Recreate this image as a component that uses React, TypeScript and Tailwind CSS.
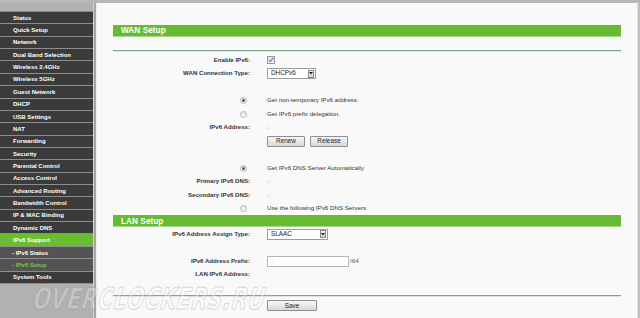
import React from "react";

type Item = { t: string; kind?: "active" | "sub" | "current" };

const menu: Item[] = [
  { t: "Status" },
  { t: "Quick Setup" },
  { t: "Network" },
  { t: "Dual Band Selection" },
  { t: "Wireless 2.4GHz" },
  { t: "Wireless 5GHz" },
  { t: "Guest Network" },
  { t: "DHCP" },
  { t: "USB Settings" },
  { t: "NAT" },
  { t: "Forwarding" },
  { t: "Security" },
  { t: "Parental Control" },
  { t: "Access Control" },
  { t: "Advanced Routing" },
  { t: "Bandwidth Control" },
  { t: "IP & MAC Binding" },
  { t: "Dynamic DNS" },
  { t: "IPv6 Support", kind: "active" },
  { t: "- IPv6 Status", kind: "sub" },
  { t: "- IPv6 Setup", kind: "current" },
  { t: "System Tools" },
];

function MenuItem({ item }: { item: Item }) {
  let cls = "bg-[#3b3b3b] text-white pl-[13px]";
  if (item.kind === "active") cls = "bg-[#69bd2f] text-white pl-[13px]";
  if (item.kind === "sub") cls = "bg-[#545454] text-white pl-[12px]";
  if (item.kind === "current") cls = "bg-[#545454] text-[#7cc444] pl-[12px]";
  return (
    <div
      className={`h-[12.36px] border-t border-[#8d8d8d] flex items-center text-[6px] font-bold leading-none whitespace-nowrap ${cls}`}
    >
      {item.t}
    </div>
  );
}

function Row({ label, children, radio }: { label?: string; children?: React.ReactNode; radio?: React.ReactNode }) {
  return (
    <div className="h-[13.5px] flex items-center">
      <div className="w-[137px] shrink-0 flex justify-end items-center text-right font-bold text-[6.1px] text-[#333] leading-none whitespace-nowrap">
        {radio ? <div className="pr-[3px] flex items-center">{radio}</div> : label}
      </div>
      <div className="ml-[17px] flex items-center text-[6.2px] text-[#333] leading-none whitespace-nowrap">{children}</div>
    </div>
  );
}

function Radio({ on }: { on?: boolean }) {
  return (
    <div className="w-[7px] h-[7px] rounded-full border border-[#b4b4b4] bg-gradient-to-b from-[#e6e6e6] to-[#fbfbfb] flex items-center justify-center">
      {on ? <div className="w-[3px] h-[3px] rounded-full bg-[#2f5f8f]" /> : null}
    </div>
  );
}

function Select({ value, w }: { value: string; w: string }) {
  return (
    <div className={`${w} h-[11px] border border-[#9c9c9c] bg-white flex items-center justify-between pl-[3px] pr-[1px]`}>
      <span className="text-[6.4px] text-[#222]">{value}</span>
      <div className="w-[6px] h-[8px] border border-[#8a8a8a] bg-gradient-to-b from-[#f2f2f2] to-[#d4d4d4] flex items-center justify-center">
        <svg width="4" height="3" viewBox="0 0 4 3">
          <path d="M0 0 L4 0 L2 2.5 Z" fill="#222" />
        </svg>
      </div>
    </div>
  );
}

function Btn({ label, w }: { label: string; w: string }) {
  return (
    <div
      className={`${w} h-[11px] border border-[#8f8f8f] rounded-[1px] bg-gradient-to-b from-[#f7f7f7] to-[#d9d9d9] flex items-center justify-center text-[6.4px] text-[#222]`}
    >
      {label}
    </div>
  );
}

function Bar({ title }: { title: string }) {
  return (
    <div className="h-[12px] bg-[#67bb32] border-b border-[#a9da8a] flex items-center pl-[8px] text-white font-bold text-[8.3px] leading-none">
      {title}
    </div>
  );
}

export default function App() {
  return (
    <div className="w-[640px] h-[318px] overflow-hidden relative bg-[#f9f9f9] flex flex-col font-['Liberation_Sans',Arial,sans-serif]">
      <div className="h-[3px] bg-[#b8b8b8] shrink-0" />
      <div className="flex flex-1 min-h-0">
        <aside className="w-[93px] shrink-0 bg-[#b1b1b1] flex flex-col pt-[8px]">
          {menu.map((m) => (
            <MenuItem key={m.t} item={m} />
          ))}
          <div className="h-[1px] bg-[#8d8d8d]" />
        </aside>
        <div className="w-[1px] bg-[#d0d0d0]" />
        <div className="w-[2px] bg-[#a6a6a6]" />
        <div className="w-[1px] bg-[#ececec]" />
        <main className="flex-1 px-[16px] pt-[22px] flex flex-col">
          <Bar title="WAN Setup" />
          <div className="mt-[13px] h-[1px] bg-[#84a590]" />
          <div className="h-[1px] bg-[#dbe7df]" />
          <div className="mt-[1.25px] flex flex-col">
            <Row label="Enable IPv6:">
              <div className="w-[8px] h-[8px] border border-[#8e9bb0] bg-gradient-to-b from-[#d7dfea] to-[#eef2f7] flex items-center justify-center">
                <svg width="6" height="6" viewBox="0 0 6 6">
                  <path d="M1 3.2 L2.4 4.8 L5 1" stroke="#3a5a8c" strokeWidth="1" fill="none" />
                </svg>
              </div>
            </Row>
            <Row label="WAN Connection Type:">
              <Select value="DHCPv6" w="w-[49px]" />
            </Row>
            <Row />
            <Row radio={<Radio on />}>Get non-temporary IPv6 address.</Row>
            <Row radio={<Radio />}>Get IPv6 prefix delegation.</Row>
            <Row label="IPv6 Address:">
              <span className="text-[#888]">::</span>
            </Row>
            <Row>
              <div className="flex gap-[5px]">
                <Btn label="Renew" w="w-[38px]" />
                <Btn label="Release" w="w-[38px]" />
              </div>
            </Row>
            <Row />
            <Row radio={<Radio on />}>Get IPv6 DNS Server Automatically</Row>
            <Row label="Primary IPv6 DNS:">
              <span className="text-[#888]">::</span>
            </Row>
            <Row label="Secondary IPv6 DNS:">
              <span className="text-[#888]">::</span>
            </Row>
            <Row radio={<Radio />}>Use the following IPv6 DNS Servers</Row>
          </div>
          <Bar title="LAN Setup" />
          <div className="flex flex-col">
            <Row label="IPv6 Address Assign Type:">
              <Select value="SLAAC" w="w-[61px]" />
            </Row>
            <Row />
            <Row label="IPv6 Address Prefix:">
              <div className="w-[82px] h-[11px] border border-[#b5b5b5] bg-white flex items-center pl-[3px] text-[#999]">::</div>
              <span className="ml-[1px] text-[#555]">/64</span>
            </Row>
            <Row label="LAN IPv6 Address:" />
          </div>
          <div className="mt-[14px] h-[1px] bg-[#84a590]" />
          <div className="h-[1px] bg-[#dbe7df]" />
          <div className="mt-[3px] flex">
            <div className="ml-[154px]">
              <Btn label="Save" w="w-[50px]" />
            </div>
          </div>
        </main>
        <div className="w-[1px] bg-[#e2e2e2]" />
        <div className="w-[2px] bg-[#bdbdbd]" />
      </div>
      <div className="absolute left-[34px] top-[284px] pointer-events-none origin-left scale-x-[0.68] skew-x-[-12deg] italic font-bold text-[30px] leading-none tracking-[1px] text-white/25 [-webkit-text-stroke:1px_rgba(100,100,100,0.25)] font-['DejaVu_Sans',sans-serif] whitespace-nowrap">
        OVERCLOCKERS.RU
      </div>
    </div>
  );
}
